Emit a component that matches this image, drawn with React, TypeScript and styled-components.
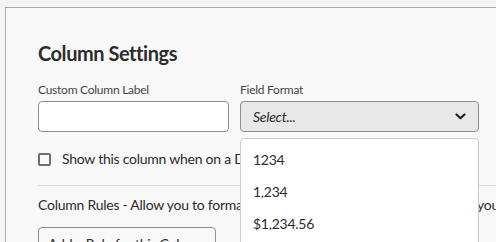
import styled, { createGlobalStyle } from 'styled-components';

const GlobalStyle = createGlobalStyle`
  html, body {
    margin: 0;
    background: #f4f4f4;
    overflow: hidden;
  }
  body {
    font-family: Lato, "Open Sans", sans-serif;
    color: #2c2c2c;
    letter-spacing: -0.25px;
  }
`;

const Page = styled.div`
  padding: 7px 0 0 5px;
  width: 620px;
  height: 260px;
`;

const Panel = styled.section`
  border-top: 1px solid #a9a9a9;
  border-left: 1px solid #a9a9a9;
  background: #f8f8f8;
  padding: 32px 0 0 32px;
  height: 100%;
`;

const Title = styled.h2`
  margin: 0 0 16px;
  font-size: 20px;
  line-height: 26px;
  font-weight: 700;
  letter-spacing: -0.45px;
  color: #2c2c2c;
`;

const FieldGrid = styled.div`
  display: grid;
  grid-template-columns: 191px 239px;
  column-gap: 11px;
`;

const Field = styled.div`
  position: relative;
  display: flex;
  flex-direction: column;
`;

const Label = styled.label`
  font-size: 12px;
  line-height: 16px;
  color: #464646;
  margin-bottom: 3px;
`;

const TextInput = styled.input`
  box-sizing: border-box;
  height: 31px;
  border: 1px solid #8f8f8f;
  border-radius: 4px;
  background: #fff;
`;

const SelectBox = styled.div`
  box-sizing: border-box;
  height: 31px;
  border: 1px solid #8e8e8e;
  border-radius: 4px;
  background: #e8e8e8;
  display: flex;
  align-items: center;
  justify-content: space-between;
  padding: 0 12px 0 12px;
  font-size: 14px;
  font-style: italic;
  color: #2c2c2c;
`;

const Menu = styled.ul`
  position: absolute;
  top: 56px;
  left: 0;
  width: 239px;
  box-sizing: border-box;
  margin: 0;
  padding: 5px 0;
  list-style: none;
  background: #fff;
  border: 1px solid #cacaca;
  border-radius: 4px;
  z-index: 2;
`;

const MenuItem = styled.li`
  height: 32px;
  line-height: 32px;
  padding: 0 12px;
  font-size: 14px;
  color: #2c2c2c;
`;

const CheckRow = styled.label`
  display: flex;
  align-items: center;
  gap: 11px;
  margin-top: 18px;
  font-size: 14px;
  line-height: 18px;
  white-space: nowrap;
`;

const Box = styled.span`
  box-sizing: border-box;
  width: 13px;
  height: 13px;
  border: 2px solid #6e6e6e;
  border-radius: 2px;
`;

const Divider = styled.hr`
  margin: 17px 0 0;
  border: 0;
  border-top: 1px solid #d8d8d8;
`;

const Hint = styled.p`
  margin: 10px 0 0;
  font-size: 14px;
  line-height: 18px;
  white-space: nowrap;
`;

const RuleButton = styled.button`
  margin-top: 13px;
  height: 32px;
  padding: 0 9px;
  border: 1px solid #8f8f8f;
  border-radius: 4px;
  background: #f8f8f8;
  font-family: inherit;
  font-size: 14px;
  letter-spacing: inherit;
  color: #2c2c2c;
`;

function Chevron() {
  return (
    <svg width="11" height="7" viewBox="0 0 11 7">
      <path d="M1.5 1.5 L5.5 5.2 L9.5 1.5" fill="none" stroke="#222" strokeWidth="2.2" strokeLinecap="round" strokeLinejoin="round" />
    </svg>
  );
}

export default function App() {
  const formats = ['1234', '1,234', '$1,234.56'];

  return (
    <Page>
      <GlobalStyle />
      <Panel>
        <Title>Column Settings</Title>
        <FieldGrid>
          <Field>
            <Label>Custom Column Label</Label>
            <TextInput />
          </Field>
          <Field>
            <Label>Field Format</Label>
            <SelectBox>
              <span>Select...</span>
              <Chevron />
            </SelectBox>
            <Menu>
              {formats.map(f => (
                <MenuItem key={f}>{f}</MenuItem>
              ))}
            </Menu>
          </Field>
        </FieldGrid>
        <CheckRow>
          <Box />
          Show this column when on a Dashboard
        </CheckRow>
        <Divider />
        <Hint>Column Rules - Allow you to format the cells of this column based on rules you define.</Hint>
        <RuleButton>Add a Rule for this Column</RuleButton>
      </Panel>
    </Page>
  );
}
